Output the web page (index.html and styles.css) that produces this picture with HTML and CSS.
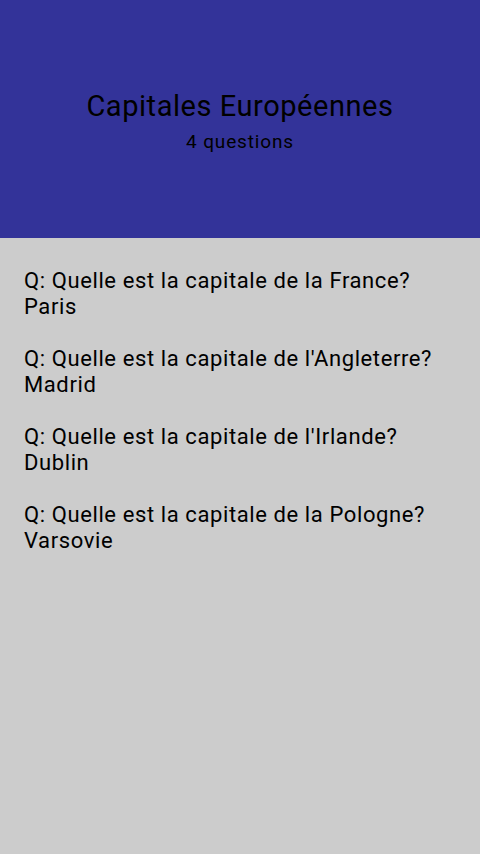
FILE: index.html
```html
<!DOCTYPE html>
<html lang="fr">
<head>
  <meta charset="UTF-8">
  <meta name="viewport" content="width=device-width, initial-scale=1.0">
  <title>Capitales Européennes</title>
  <link rel="stylesheet" href="styles.css">
</head>
<body>
  <div class="header">
    <h1 class="title">Capitales Européennes</h1>
    <p class="count">4 questions</p>
  </div>
  <div class="questions">
    <div class="question">
      <p>Q: Quelle est la capitale de la France?</p>
      <p>Paris</p>
    </div>
    <div class="question">
      <p>Q: Quelle est la capitale de l'Angleterre?</p>
      <p>Madrid</p>
    </div>
    <div class="question">
      <p>Q: Quelle est la capitale de l'Irlande?</p>
      <p>Dublin</p>
    </div>
    <div class="question">
      <p>Q: Quelle est la capitale de la Pologne?</p>
      <p>Varsovie</p>
    </div>
  </div>
</body>
</html>
```

FILE: styles.css
```css
html, body {
  height: 100%;
}
body {
  margin: 0;
  font-family: Roboto, "Noto Sans", sans-serif;
  background-color: #cccccc;
  color: #000;
}
p {
  margin: 0;
}
.header {
  box-sizing: border-box;
  height: 238px;
  padding-top: 4px;
  background-color: #333399;
  display: flex;
  flex-direction: column;
  align-items: center;
  justify-content: center;
}
.title {
  margin: 0;
  font-size: 29px;
  font-weight: normal;
  line-height: 36px;
  letter-spacing: 0.55px;
}
.count {
  margin-top: 6px;
  font-size: 19px;
  line-height: 24px;
  letter-spacing: 0.85px;
}
.questions {
  padding: 30px 24px;
}
.question {
  font-size: 22px;
  line-height: 26px;
  letter-spacing: 0.6px;
  margin-bottom: 26px;
}
```
